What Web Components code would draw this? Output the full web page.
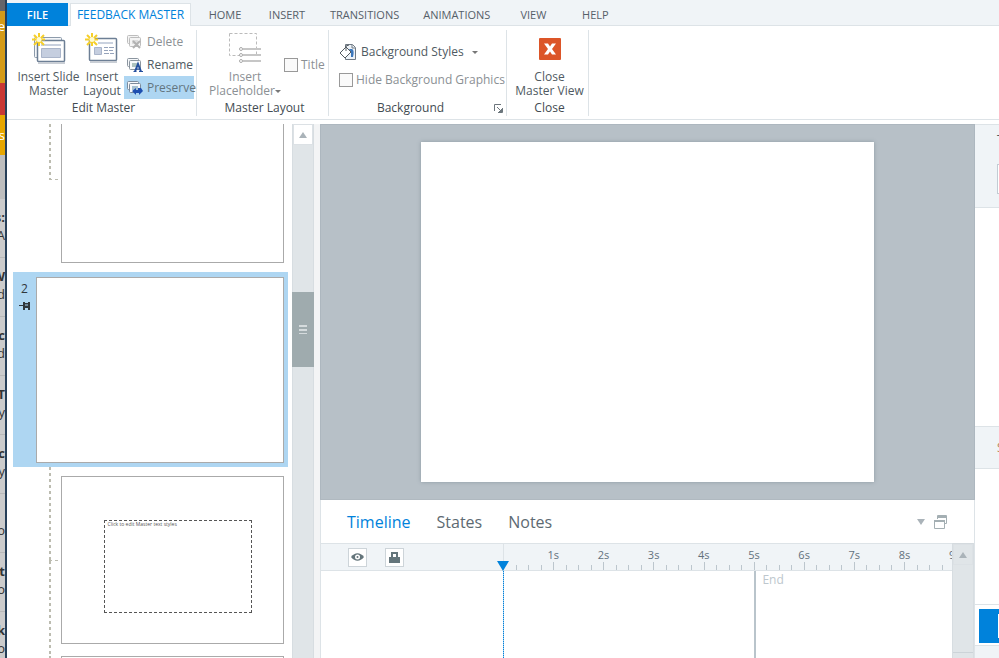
<!DOCTYPE html>
<html lang="en">
<head>
<meta charset="utf-8">
<title>Feedback Master</title>
<style>
html,body{margin:0;height:100%}
body{font:12px/14px "Open Sans","Noto Sans",sans-serif;color:#4f5a62;background:#fff;overflow:hidden;
--line:#dde3e7;--pale:#f0f4f7;--blue:#0082db;--sel:#aed6f2;--grey:#8b9094}
</style>
</head>
<body>
<app-window></app-window>
<script>
const define=(name,html,setup)=>{
  const t=document.createElement('template');
  t.innerHTML='<style>*{box-sizing:border-box}button,input{font:inherit;color:inherit}button{border:0;background:none;padding:0;margin:0}</style>'+html;
  customElements.define(name,class extends HTMLElement{
    constructor(){super();this.attachShadow({mode:'open'}).append(t.content.cloneNode(true));}
    connectedCallback(){if(setup&&!this.ready){this.ready=true;setup(this,this.shadowRoot);}}
  });
};

const star='<g stroke="#f6cf2a" stroke-width="2"><path d="M7 0v13M0 6.500h13M2 2l10 10M12 2L2 12"/></g><circle cx="7" cy="6.500" r="2.500" fill="#fffbd0"/>';
const stack=(a,b,c)=>`<g stroke="${a}" fill="${b}"><rect x="0.500" y="1.500" width="11" height="8" rx="1"/><rect x="2.500" y="3.500" width="11" height="9" rx="1"/></g><path fill="${c}" d="M5 6h6v4H5z"/>`;
const icons={
  slide:`<svg width="34" height="32" viewBox="0 0 34 32" fill="none"><rect x="2.500" y="4.500" width="27" height="20" rx="1" fill="#f5f7fa" stroke="#8d9bab"/><rect x="5.500" y="7.500" width="27" height="21" rx="1" fill="#fff" stroke="#6d7f95" stroke-width="1.500"/><path stroke="#c9ced5" stroke-width="2" d="M6 30h27"/><path stroke="#c8d0de" stroke-width="2" d="M9 12h20"/><path fill="#c5cedf" stroke="#aab5ca" d="M9.500 15.500h19v9h-19z"/>${star}</svg>`,
  layout:`<svg width="34" height="32" viewBox="0 0 34 32" fill="none"><rect x="4.500" y="5.500" width="27" height="22" rx="1" fill="#fff" stroke="#6d7f95" stroke-width="1.500"/><path stroke="#c9ced5" stroke-width="2" d="M5 29h27"/><path stroke="#cad2df" stroke-width="2" d="M13 10h15"/><path fill="#c5cedf" stroke="#aab5ca" d="M9.500 14.500h7v7h-7z"/><path stroke="#95a3bb" d="M19 14.500h4M24 14.500h5M19 17.500h4M24 17.500h4M19 20.500h5M25 20.500h4"/>${star}</svg>`,
  placeholder:'<svg width="34" height="34" viewBox="0 0 34 34" fill="none" stroke="#bbb"><path stroke-dasharray="3 2" d="M1.500 1.500h27v22h-27z"/><path stroke-width="2" stroke="#c6c6c6" d="M15 17h18M15 23h18M15 29h18"/><g fill="#fff" stroke="#aaa"><circle cx="13" cy="17" r="1.500"/><circle cx="13" cy="23" r="1.500"/><circle cx="13" cy="29" r="1.500"/></g></svg>',
  close:'<svg width="22" height="22" viewBox="0 0 22 22"><rect width="22" height="22" rx="1" fill="#dc5528"/><path d="M5 5.500h4l2 3 2-3h4l-4 5.500 4 5.500h-4l-2-3-2 3H5L9 11z" fill="#fff"/></svg>',
  del:`<svg width="16" height="16" viewBox="0 0 16 16" fill="none">${stack('#bdbdbd','#f4f4f4','#ddd')}<path stroke="#b2b2b2" stroke-width="2" d="M6 7l7 7M13 7l-7 7"/></svg>`,
  rename:`<svg width="16" height="16" viewBox="0 0 16 16" fill="none">${stack('#8b959f','#f7f9fb','#aec3bf')}<path stroke="#244f9e" stroke-width="2" d="M8 14.500L11 7l3 7.500"/><path stroke="#244f9e" d="M9 12h4M6.500 14.500h3M12 14.500h4"/></svg>`,
  preserve:`<svg width="16" height="16" viewBox="0 0 16 16" fill="none">${stack('#7c8b9c','#f7f9fb','#a5c1d2')}<path fill="#1e4fb0" d="M5 11l4-3v2h2V8h3l2 3-4 4v-2H9v2z"/></svg>`,
  bucket:'<svg width="18" height="18" viewBox="0 0 18 18" fill="none"><path d="M6.500 1.500h7l3 3v12h-10z" fill="#eef3f8" stroke="#707a84"/><path d="M13 2v3h3" stroke="#707a84"/><path fill="#3c78bd" d="M10 6h3c2 1 2 4 1 8h-2V9z"/><path fill="#fff" stroke="#535a60" d="M1 10l6-6 5 5-6 6z"/><path stroke="#535a60" d="M7 8V3l3-1"/></svg>'
};

define('ribbon-tool',`<style>
:host{display:block}button{display:flex;align-items:center;white-space:nowrap}
:host([size=large]) button{flex-direction:column;width:100%}
:host([size=large]) .icon{height:38px;margin-bottom:2px}
:host([size=small]) button{gap:4px;height:23px;width:100%;padding:0 3px}
:host([flush]) button{padding:0}
:host([active]) button{background:var(--sel);color:#63757f}
:host([muted]) button{color:var(--grey)}
.icon{display:flex;align-items:center;justify-content:center}
</style><button type="button"><span class="icon"></span><span class="text"><slot></slot></span></button>`,
(h,r)=>{r.querySelector('.icon').innerHTML=icons[h.getAttribute('icon')];});

define('ribbon-check',`<style>:host{display:block;color:var(--grey)}label{display:flex;align-items:center;gap:3px;white-space:nowrap}
input{appearance:none;width:14px;height:14px;margin:0;border:1px solid #999;background:#fafafa}</style>
<label><input type="checkbox"><span><slot></slot></span></label>`);

define('ribbon-group',`<style>:host{display:flex;flex-direction:column;border-right:1px solid var(--line);margin:4px 0 3px}
.body{flex:1;display:flex}.cap{display:grid;grid-template-columns:1fr auto 1fr;height:16px;align-items:center;color:#424b52;padding-left:4px}
:host([launcher]) .cap{grid-template-columns:0 1fr 14px;text-align:center;padding:0}
.cap button{justify-self:end;width:14px;height:14px;padding:2px}.cap svg{display:block}</style>
<div class="body"><slot></slot></div><div class="cap"><i></i><span></span></div>`,
(h,r)=>{r.querySelector('span').textContent=h.getAttribute('caption');
if(h.hasAttribute('launcher')){const b=document.createElement('button');b.ariaLabel='More options';b.innerHTML='<svg width="9" height="9" fill="none" stroke="#6d767d"><path d="M.5 7V.5H7M3 3l4 4M8.500 4v4.500H4"/><path d="M5 8l3-3v3z" fill="#6d767d"/></svg>';r.querySelector('.cap').append(b);}});

define('ribbon-bar',`<style>
:host{display:block;border-bottom:1px solid var(--line);background:#fff}
nav{display:flex;height:26px;padding-top:3px;background:var(--pale);border-bottom:1px solid var(--line);font-size:11px}
nav button{height:23px;color:#566069}
nav .file{width:61px;background:var(--blue);color:#fff;font-weight:600}
nav .on{width:121px;margin:0 3px 0 2px;background:#fff;border:1px solid var(--line);border-bottom:0;color:var(--blue);font-size:12px}
nav .t{padding:0 12px;min-width:62px}
.groups{display:flex;height:93px}
.g1{width:190px}.g2{width:132px}.g3{width:178px}.g4{width:82px}
.big1{width:73px;padding-left:10px}.big2{width:44px}
.smalls{width:70px}.ph{width:87px;padding-left:9px}.titlebox{padding-top:28px}
.bg{padding:10px 0 0 10px;display:flex;flex-direction:column;gap:10px}
.col{display:flex;justify-content:center;width:100%;padding-left:4px}
ribbon-tool{text-align:center}
.arrow{display:inline-block;border:3px solid transparent;border-top:3px solid #777;border-bottom:0;vertical-align:middle}
.wide{margin-left:8px}
</style>
<nav><button class="file">FILE</button><button class="on">FEEDBACK MASTER</button><button class="t">HOME</button><button class="t">INSERT</button><button class="t">TRANSITIONS</button><button class="t">ANIMATIONS</button><button class="t">VIEW</button><button class="t">HELP</button></nav>
<div class="groups">
<ribbon-group class="g1" caption="Edit Master"><ribbon-tool class="big1" size="large" icon="slide">Insert Slide<br>Master</ribbon-tool><ribbon-tool class="big2" size="large" icon="layout">Insert<br>Layout</ribbon-tool><div class="smalls"><ribbon-tool size="small" muted icon="del">Delete</ribbon-tool><ribbon-tool size="small" icon="rename">Rename</ribbon-tool><ribbon-tool size="small" active icon="preserve">Preserve</ribbon-tool></div></ribbon-group>
<ribbon-group class="g2" caption="Master Layout"><ribbon-tool class="ph" size="large" muted icon="placeholder">Insert<br>Placeholder<span class="arrow"></span></ribbon-tool><ribbon-check class="titlebox">Title</ribbon-check></ribbon-group>
<ribbon-group class="g3" caption="Background" launcher><div class="bg"><ribbon-tool size="small" flush icon="bucket">Background Styles<span class="arrow wide"></span></ribbon-tool><ribbon-check>Hide Background Graphics</ribbon-check></div></ribbon-group>
<ribbon-group class="g4" caption="Close"><div class="col"><ribbon-tool size="large" icon="close">Close<br>Master View</ribbon-tool></div></ribbon-group>
</div>`);

define('scroll-rail',`<style>:host{display:flex;flex-direction:column;width:22px;background:#e0e5e8;border:1px solid #d7dde1;border-width:0 1px}
button{height:21px;width:100%;background:var(--cap,#fff);border:1px solid #dce1e5;display:flex;align-items:center;justify-content:center}
.up{border:4px solid transparent;border-bottom:6px solid #aab3b9;border-top:0}
.thumb{display:none;margin:147px -1px 0;height:75px;background:#9fabae;align-items:center;justify-content:center}
:host([thumb]) .thumb{display:flex}
.grip{width:8px;height:9px;background:repeating-linear-gradient(#d5dbdd 0 2px,transparent 2px 4px)}
.end{display:none;margin-top:auto;height:6px;border-top:1px solid #ccd3d8}:host([end]) .end{display:block}</style>
<button aria-label="Scroll up"><span class="up"></span></button><div class="thumb"><div class="grip"></div></div><div class="end"></div>`);

define('slide-item',`<style>
:host{display:grid;grid-template-columns:54px 1fr;padding-right:8px;flex:none}
.gutter{display:flex;flex-direction:column;padding-left:42px}
.v{--d:#bcbcb0;background:repeating-linear-gradient(var(--d) 0 3px,transparent 3px 6px) 0 0/2px 100% no-repeat,repeating-linear-gradient(90deg,var(--d) 0 3px,transparent 3px 6px) 0 100%/100% 1px no-repeat}
.a{height:56px}.b{display:none;flex:1;background-size:2px 100%,0 0}
.thumb{border:1px solid #aaa;background:#fff;height:168px;margin-top:9px;display:flex;align-items:center;justify-content:center}
:host([kind=first]) .thumb{height:139px;margin:0;border-top:0}
:host([kind=mid]) .a{height:94px}:host([kind=mid]) .b,:host([kind=last]) .b{display:block}
:host([kind=mid]){padding-bottom:12px}
:host([kind=mid]) .gutter{margin-bottom:-12px}
:host([kind=last]) .a{display:none}:host([kind=last]) .thumb{margin:0}
</style><div class="gutter"><div class="v a"></div><div class="v b"></div></div><div class="thumb"><slot></slot></div>`);

define('slide-list',`<style>
:host{display:flex;min-height:0;background:#fff;overflow:hidden}
.list{flex:1;display:flex;flex-direction:column;overflow:hidden}
.sel{flex:none;margin:9px 4px 0 6px;background:var(--sel);display:grid;grid-template-columns:23px 1fr;padding:5px 4px 4px 0;height:195px}
.sel>div{border:1px solid #aaa;background:#fff}
.num{display:flex;flex-direction:column;align-items:center;gap:5px;padding-top:5px;color:#30373c}
.text{width:148px;height:93px;border:1px dashed #555;font-size:5px;line-height:7px;padding:0 3px;color:#555;margin:12px 0 0 10px;white-space:nowrap}
.gap{width:6px;background:#f3f4f5}
</style>
<div class="list"><slide-item kind="first"></slide-item>
<div class="sel"><span class="num">2<svg width="12" height="10" viewBox="0 0 12 10"><path fill="#30373c" d="M0 4h4V1h2v1h3V1h2v8H9V7H6v2H4V5H0z"/><path stroke="#aed6f2" d="M6 4h3"/></svg></span><div></div></div>
<slide-item kind="mid"><div class="text">Click to edit Master text styles</div></slide-item><slide-item kind="last"></slide-item></div>
<scroll-rail thumb></scroll-rail><div class="gap"></div>`);

define('slide-canvas',`<style>:host{flex:1;min-height:0;display:flex;align-items:center;justify-content:center;background:#b7c0c7;border:1px solid #adb7bf;border-bottom-color:#b0b9c0}
div{width:69.5%;aspect-ratio:4/3;background:#fff;box-shadow:0 0 4px #8d99a2}</style><div></div>`);

define('time-line',`<style>
:host{display:block;flex:none;background:#fff;border-left:1px solid var(--line);border-right:1px solid var(--line)}
.tabs{height:43px;display:flex;align-items:center;padding:0 26px;gap:26px;font-size:16px;line-height:22px;color:#5d6a72}
.tabs .on{color:var(--blue)}.tools{margin-left:auto;display:flex;gap:9px;align-items:center}
.tools button{display:flex}
.grid{display:grid;grid-template-columns:182px 1fr 22px;grid-template-rows:28px 87px}
.head,.ruler{background:var(--pale);border:1px solid var(--line);border-width:1px 0}
.head{display:flex;align-items:center;gap:18px;padding:0 0 0 27px}
.head button{width:19px;height:19px;border:1px solid #cdd4d9;background:#fff;display:flex;align-items:center;justify-content:center}
.ruler{border-left:1px solid var(--line);overflow:hidden;display:flex;flex-direction:column;justify-content:space-between;font-size:11px;color:#63717c}
.labels,.ticks{display:flex}.labels{padding-top:4px}.labels span{flex:0 0 11.2%;text-align:center}.labels i{flex:0 0 5.4%}
.ticks{height:8px}.ticks span{flex:0 0 2.8%;align-self:end;height:5px;border-right:1px solid #bcc6cd}
.ticks span:nth-child(4n){height:8px}
.track{position:relative}
.play{position:absolute;left:0;top:0;bottom:0;width:1px;background:repeating-linear-gradient(#0082db 0 1px,#9ecbec 1px 2px)}
.play:before{content:"";position:absolute;left:-6px;top:-10px;border:6px solid transparent;border-top:10px solid var(--blue);border-bottom:0}
.end{margin-left:56%;height:100%;border-left:2px solid #b9c4cb;padding:2px 0 0 6px;color:#bdc7cd}
scroll-rail{grid-column:3;grid-row:1/3;border-top:1px solid #d4dade;--cap:#e0e5e8}
</style>
<div class="tabs"><button class="on">Timeline</button><button>States</button><button>Notes</button><div class="tools"><button aria-label="Collapse"><svg width="8" height="6"><path d="M0 0h8L4 6z" fill="#aab3b9"/></svg></button><button aria-label="Undock"><svg width="14" height="14" fill="none" stroke="#a4afb3"><path d="M3.500 4V.5h9v8H11"/><path stroke-width="2" d="M3 2h10"/><path fill="#fff" d="M.5 5.500h10v8H.5z"/><path stroke-width="2" d="M0 6h11"/></svg></button></div></div>
<div class="grid"><div class="head"><button aria-label="Show all"><svg width="13" height="8"><path d="M0 4c4-5 9-5 13 0-4 5-9 5-13 0z" fill="#64757b"/><circle cx="6.500" cy="4" r="2.500" fill="#fff"/><circle cx="6.500" cy="4" r="1" fill="#64757b"/></svg></button><button aria-label="Lock all"><svg width="11" height="11"><path d="M3 6V1h5v5" fill="none" stroke="#64757b" stroke-width="2"/><path d="M0 5h11v6H0z" fill="#64757b"/></svg></button></div>
<div class="ruler"><div class="labels"><i></i></div><div class="ticks"></div></div><scroll-rail end></scroll-rail>
<div></div><div class="track"><div class="end">End</div><div class="play"></div></div></div>`,
(h,r)=>{for(let i=1;i<10;i++)r.querySelector('.labels').insertAdjacentHTML('beforeend',`<span>${i}s</span>`);
for(let i=0;i<35;i++)r.querySelector('.ticks').append(document.createElement('span'));});

define('side-panel',`<style>:host{display:flex;flex-direction:column;overflow:hidden;background:#fff}
section{border:1px solid var(--line);border-width:1px 0;background:var(--pale);flex:none;overflow:hidden}
.a{height:84px;padding:8px 0 0 22px}.a input{display:block;width:60px;height:30px;margin-top:17px;border:1px solid #c2ccd4;background:#fff}
.b{height:43px;margin-top:218px;padding:14px 0 0 22px;color:#b0885c}.c{margin-top:auto;height:42px;padding:4px 0 0 4px;background:#fff}
.c button{width:40px;height:34px;background:var(--blue);padding:5px 0 5px 19px;display:flex}.c i{width:16px;height:24px;background:#fff}
.d{height:12px;background:var(--pale);flex:none}</style>
<section class="a">T<input aria-label="Value"></section><section class="b">S</section><section class="c"><button aria-label="Preview"><i></i></button></section><div class="d"></div>`);

define('desktop-strip',`<style>:host{display:block;overflow:hidden;background:#ccc;border-right:2px solid #273f58;color:#333;font-size:13px;line-height:18px}
.pic{height:155px;background:linear-gradient(#65656a 0 11px,#d39a18 11px 83px,#c83734 83px 115px,#e6a600 115px);color:#fff;padding-top:17px}
.pic p:last-child{margin-top:91px}.bar{height:44px;background:#bebebe}
p{margin:0;display:flex;justify-content:flex-end;height:18px}.m{height:59px;border-bottom:1px solid #b9b9b9;padding-top:9px}.m:nth-child(4){background:#b4b4b4}</style>
<div class="pic"><p>e</p><p>s</p></div><div class="bar"></div>`,
(h,r)=>{for(const [a,b] of [['s:','A'],['W','d'],['oc','d'],['T','y'],['uc','y'],['','o'],['t','o'],['ak','o']])r.append(Object.assign(document.createElement('div'),{className:'m',innerHTML:`<p><b>${a}</b></p><p>${b}</p>`}));});

define('app-window',`<style>:host{display:grid;grid-template-columns:7px 1fr;height:100vh;min-width:0}
main{display:flex;flex-direction:column;min-width:0;min-height:0}
.work{flex:1;min-height:0;display:grid;grid-template-columns:313px minmax(0,1fr) 24px;grid-template-rows:minmax(0,1fr);padding-top:4px}
.center{display:flex;flex-direction:column;min-height:0}</style>
<desktop-strip></desktop-strip><main><ribbon-bar></ribbon-bar><div class="work"><slide-list></slide-list><div class="center"><slide-canvas></slide-canvas><time-line></time-line></div><side-panel></side-panel></div></main>`);
</script>
</body>
</html>
